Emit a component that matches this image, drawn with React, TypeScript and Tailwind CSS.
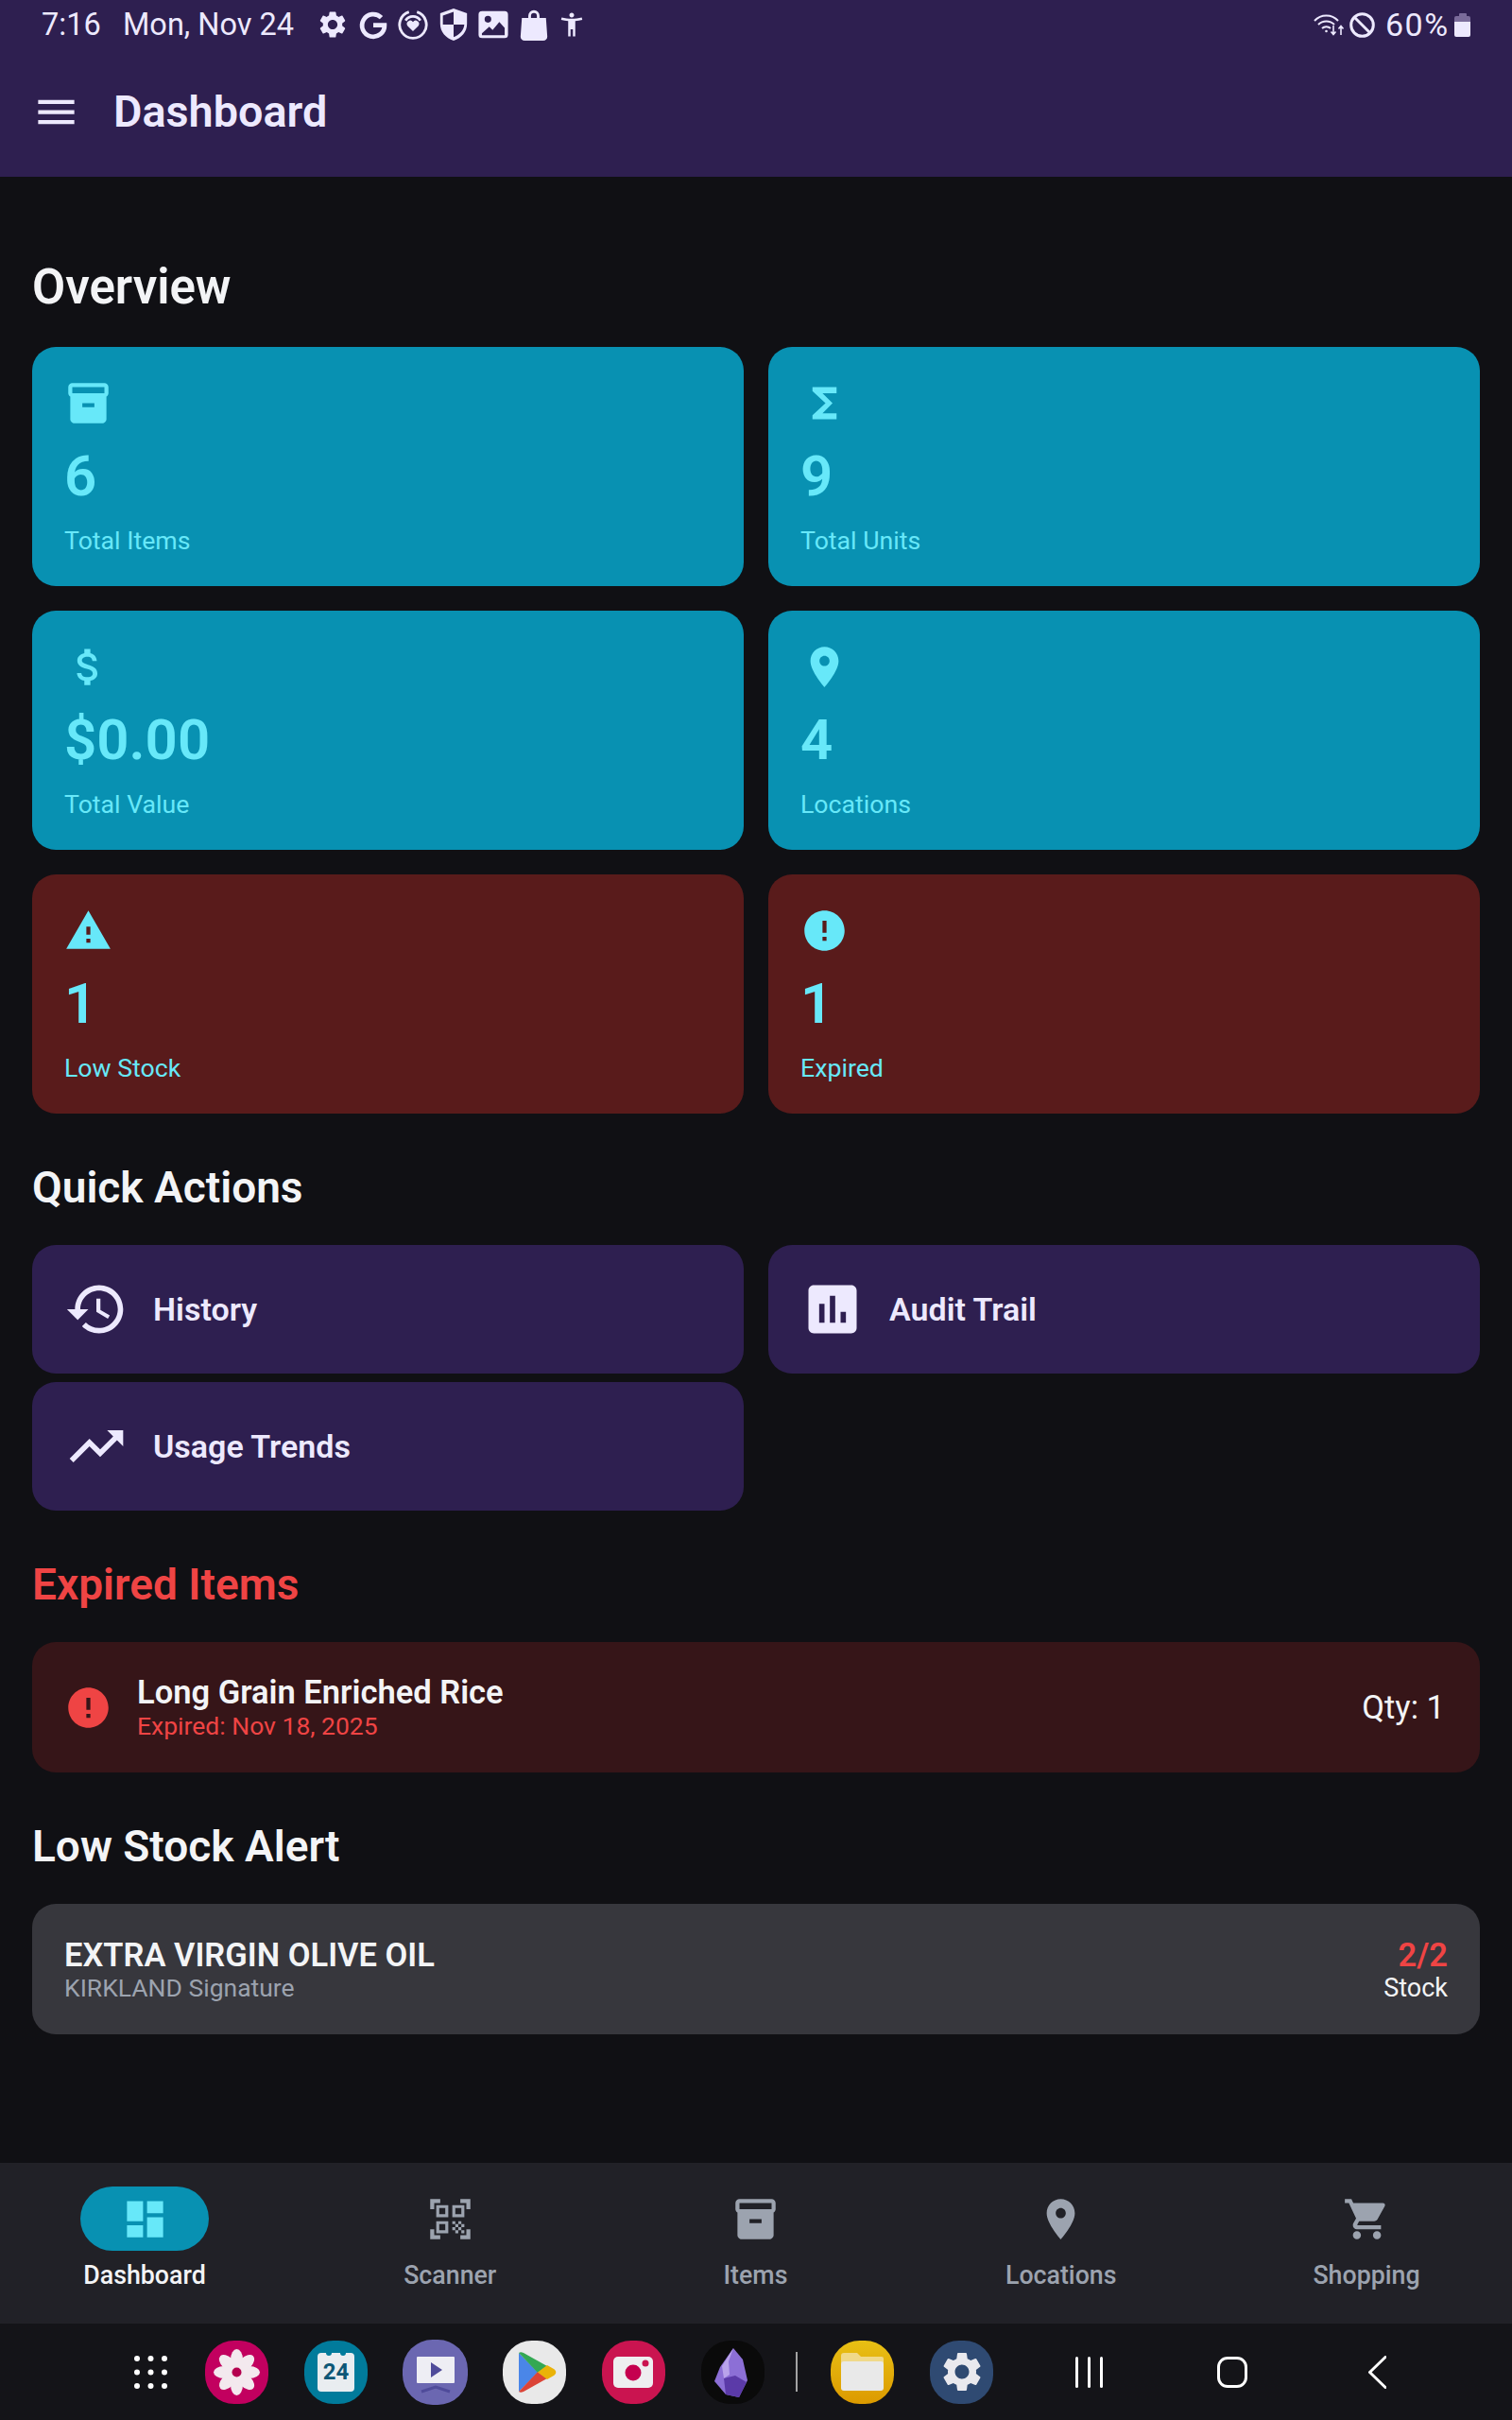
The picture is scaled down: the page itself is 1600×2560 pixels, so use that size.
import React from "react";

const P = {
  inventory: "M20 2H4c-1 0-2 .9-2 2v3.01c0 .72.43 1.34 1 1.69V20c0 1.1 1.1 2 2 2h14c.9 0 2-.9 2-2V8.7c.57-.35 1-.97 1-1.69V4c0-1.1-1-2-2-2zm-5 12H9v-2h6v2zm5-7H4V4l16-.02V7z",
  sigma: "M18 4H6v2l6.5 6L6 18v2h12v-3h-7l5-5-5-5h7z",
  money: "M11.8 10.9c-2.27-.59-3-1.2-3-2.15 0-1.09 1.01-1.85 2.7-1.85 1.78 0 2.44.85 2.5 2.1h2.21c-.07-1.72-1.12-3.3-3.21-3.81V3h-3v2.16c-1.94.42-3.5 1.68-3.5 3.61 0 2.31 1.91 3.46 4.7 4.13 2.5.6 3 1.48 3 2.41 0 .69-.49 1.79-2.7 1.79-2.06 0-2.87-.92-2.98-2.1h-2.2c.12 2.19 1.76 3.42 3.68 3.83V21h3v-2.15c1.95-.37 3.5-1.5 3.5-3.55 0-2.84-2.43-3.81-4.7-4.4z",
  pin: "M12 2C8.13 2 5 5.13 5 9c0 5.25 7 13 7 13s7-7.75 7-13c0-3.87-3.13-7-7-7zm0 9.5c-1.38 0-2.5-1.12-2.5-2.5s1.12-2.5 2.5-2.5 2.5 1.12 2.5 2.5-1.12 2.5-2.5 2.5z",
  warning: "M1 21h22L12 2 1 21zm12-3h-2v-2h2v2zm0-4h-2v-4h2v4z",
  error: "M12 2C6.48 2 2 6.48 2 12s4.48 10 10 10 10-4.48 10-10S17.52 2 12 2zm1 15h-2v-2h2v2zm0-4h-2V7h2v6z",
  history: "M13 3c-4.97 0-9 4.03-9 9H1l3.89 3.89.07.14L9 12H6c0-3.87 3.13-7 7-7s7 3.13 7 7-3.13 7-7 7c-1.93 0-3.68-.79-4.94-2.06l-1.42 1.42C8.27 19.99 10.51 21 13 21c4.97 0 9-4.03 9-9s-4.03-9-9-9zm-1 5v5l4.28 2.54.72-1.21-3.5-2.08V8H12z",
  assessment: "M19 3H5c-1.1 0-2 .9-2 2v14c0 1.1.9 2 2 2h14c1.1 0 2-.9 2-2V5c0-1.1-.9-2-2-2zM9 17H7v-7h2v7zm4 0h-2V7h2v10zm4 0h-2v-4h2v4z",
  trending: "M16 6l2.29 2.29-4.88 4.88-4-4L2 16.59 3.41 18l6-6 4 4 6.3-6.29L22 12V6z",
  dashboard: "M3 13h8V3H3v10zm0 8h8v-6H3v6zm10 0h8V11h-8v10zm0-18v6h8V3h-8z",
  qr: "M9.5 6.5v3h-3v-3h3M11 5H5v6h6V5zm-1.5 9.5v3h-3v-3h3M11 13H5v6h6v-6zm6.5-6.5v3h-3v-3h3M19 5h-6v6h6V5zm-6 8h1.5v1.5H13V13zm1.5 1.5H16V16h-1.5v-1.5zM16 13h1.5v1.5H16V13zm-3 3h1.5v1.5H13V16zm1.5 1.5H16V19h-1.5v-1.5zM16 16h1.5v1.5H16V16zm1.5-1.5H19V16h-1.5v-1.5zm0 3H19V19h-1.5v-1.5zM22 7h-2V4h-3V2h5v5zm0 15v-5h-2v3h-3v2h5zM2 22h5v-2H4v-3H2v5zM2 2v5h2V4h3V2H2z",
  cart: "M7 18c-1.1 0-1.99.9-1.99 2S5.9 22 7 22s2-.9 2-2-.9-2-2-2zM1 2v2h2l3.6 7.59-1.35 2.45c-.16.28-.25.61-.25.96 0 1.1.9 2 2 2h12v-2H7.42c-.14 0-.25-.11-.25-.25l.03-.09.9-1.63h7.45c.75 0 1.41-.41 1.75-1.03l3.58-6.49c.08-.14.12-.31.12-.48 0-.55-.45-1-1-1H5.21l-.94-2H1zm16 16c-1.1 0-1.99.9-1.99 2s.89 2 1.99 2 2-.9 2-2-.9-2-2-2z",
  menu: "M3 18h18v-2H3v2zm0-5h18v-2H3v2zm0-7v2h18V6H3z",
  settings: "M19.14 12.94c.04-.3.06-.61.06-.94 0-.32-.02-.64-.07-.94l2.03-1.58c.18-.14.23-.41.12-.61l-1.92-3.32c-.12-.22-.37-.29-.59-.22l-2.39.96c-.5-.38-1.03-.7-1.62-.94l-.36-2.54c-.04-.24-.24-.41-.48-.41h-3.84c-.24 0-.43.17-.47.41l-.36 2.54c-.59.24-1.13.57-1.62.94l-2.39-.96c-.22-.08-.47 0-.59.22L2.74 8.87c-.12.21-.08.47.12.61l2.03 1.58c-.05.3-.09.63-.09.94s.02.64.07.94l-2.03 1.58c-.18.14-.23.41-.12.61l1.92 3.32c.12.22.37.29.59.22l2.39-.96c.5.38 1.03.7 1.62.94l.36 2.54c.05.24.24.41.48.41h3.84c.24 0 .44-.17.47-.41l.36-2.54c.59-.24 1.13-.56 1.62-.94l2.39.96c.22.08.47 0 .59-.22l1.92-3.32c.12-.22.07-.47-.12-.61l-2.01-1.58zM12 15.6c-1.98 0-3.6-1.62-3.6-3.6s1.62-3.6 3.6-3.6 3.6 1.62 3.6 3.6-1.62 3.6-3.6 3.6z",
  access: "M20.5 6c-2.61.7-5.67 1-8.5 1s-5.89-.3-8.5-1L3 8c1.86.5 4 .83 6 1v13h2v-6h2v6h2V9c2-.17 4.14-.5 6-1l-.5-2zM12 6c1.1 0 2-.9 2-2s-.9-2-2-2-2 .9-2 2 .9 2 2 2z",
};

function I({ d, className }: { d: string; className: string }) {
  return (
    <svg viewBox="0 0 24 24" fill="currentColor" className={"shrink-0 " + className}>
      <path d={d} />
    </svg>
  );
}

function StatusBar() {
  return (
    <div className="flex h-[52px] items-center pl-[44px] pr-[44px] text-[32.5px] leading-[52px] text-[#ede9fe]">
      <span className="w-[86px]">7:16</span>
      <span className="w-[205px]">Mon, Nov 24</span>
      <div className="flex items-center gap-[8.5px]">
        <I d={P.settings} className="h-[34px] w-[34px]" />
        <svg viewBox="0 0 30 30" fill="none" stroke="currentColor" strokeWidth="4.2" className="h-[34px] w-[34px] shrink-0">
          <path d="M22.5 8.5A10.500 10.500 0 1 0 25.500 15.500H15" />
        </svg>
        <svg viewBox="0 0 24 24" fill="none" stroke="currentColor" className="h-[34px] w-[34px] shrink-0">
          <path strokeWidth="2" d="M9 2.6a10 10 0 1 0 6 0" />
          <path strokeWidth="0" fill="currentColor" d="M12 17l-4-4a2.5 2.5 0 0 1 4-3a2.5 2.5 0 0 1 4 3z" />
          <path strokeWidth="2" d="M6.5 9a6.5 6.5 0 0 1 11 0" />
        </svg>
        <svg viewBox="0 0 24 24" className="h-[34px] w-[34px] shrink-0" fill="currentColor">
          <path fillRule="evenodd" d="M12 0l10 3.5v8c0 6-4 10.500-10 12.500c-6-2-10-6.500-10-12.500v-8zM12 2.500l-8 2.800v6.700h8zM12 12v9.300c4.500-1.800 7.600-5 8-9.300z" />
        </svg>
        <svg viewBox="0 0 24 24" className="h-[34px] w-[34px] shrink-0" fill="currentColor">
          <path fillRule="evenodd" d="M3.500 2h17A2.500 2.500 0 0 1 23 4.500v15a2.500 2.500 0 0 1-2.500 2.500h-17A2.500 2.500 0 0 1 1 19.500v-15A2.500 2.500 0 0 1 3.500 2zM8 5.500a2.500 2.500 0 1 0 0 5a2.500 2.500 0 0 0 0-5zM3.500 20h17v-5.500l-4-4.500-5 6-2.500-2.500-5.500 5z" />
        </svg>
        <svg viewBox="0 0 24 24" className="h-[34px] w-[34px] shrink-0" fill="currentColor">
          <path fillRule="evenodd" d="M7.800 7V5.500a4.200 4.200 0 0 1 8.400 0V7H21l1 14a3 3 0 0 1-3 3H5a3 3 0 0 1-3-3L3 7zM9.800 7h4.400V5.500a2.200 2.200 0 0 0-4.400 0z" />
        </svg>
        <I d={P.access} className="h-[30px] w-[30px]" />
      </div>
      <div className="ml-auto flex items-center">
        <svg viewBox="0 0 33 24" fill="none" stroke="currentColor" strokeWidth="2" className="h-[24px] w-[33px] shrink-0">
          <path d="M1 8a17 17 0 0 1 25 0M5 12a12 12 0 0 1 17 0M9 16a6.500 6.500 0 0 1 9 0" />
          <circle cx="13.500" cy="19" r="1.300" fill="currentColor" stroke="none" />
          <path strokeWidth="1.600" d="M21 13v9M18.500 19.500l2.500 3 2.500-3M29 23v-9M26.500 16.500l2.500-3 2.500 3" />
        </svg>
        <svg viewBox="0 0 27 27" fill="none" stroke="currentColor" strokeWidth="3" className="ml-[5px] h-[27px] w-[27px] shrink-0">
          <circle cx="13.500" cy="13.500" r="11.800" />
          <path d="M5 5l17 17" />
        </svg>
        <span className="ml-[11px] w-[73px] text-[34px] tracking-[1.5px]">60%</span>
        <div className="flex h-[25px] w-[17px] shrink-0 flex-col items-center">
          <div className="h-[3px] w-[8px] shrink-0 rounded-t-[1px] bg-[#7a6b9a]" />
          <div className="h-[6px] w-[17px] shrink-0 rounded-t-[2px] bg-[#7a6b9a]" />
          <div className="h-[16px] w-[17px] shrink-0 rounded-b-[2px] bg-[#ede9fe]" />
        </div>
      </div>
    </div>
  );
}

function Header() {
  return (
    <div className="bg-[#2e1f50]">
      <StatusBar />
      <div className="flex h-[135px] items-center pb-[3px] pl-[34px] text-[#ede9fe]">
        <I d={P.menu} className="h-[51px] w-[51px]" />
        <span className="ml-[35px] text-[46.75px] font-semibold leading-[60px]">Dashboard</span>
      </div>
    </div>
  );
}

function Title({ children, className }: { children: React.ReactNode; className: string }) {
  return <h2 className={"h-[60px] font-semibold leading-[60px] " + className}>{children}</h2>;
}

function Stat({ d, value, label, red }: { d: string; value: string; label: string; red?: boolean }) {
  return (
    <div className={"rounded-[25px] px-[34px] pb-[27px] pt-[34px] text-[#67e8f9] " + (red ? "bg-[#591b1b]" : "bg-[#0891b2]")}>
      <I d={d} className="h-[51px] w-[51px]" />
      <div className="mt-[18px] h-[68px] text-[60px] font-semibold leading-[68px]">{value}</div>
      <div className="mt-[13px] h-[42px] text-[26.7px] leading-[42px]">{label}</div>
    </div>
  );
}

function Action({ d, label }: { d: string; label: string }) {
  return (
    <div className="flex h-[136px] items-center rounded-[25px] bg-[#2e1f50] px-[34px] text-[#ede9fe]">
      <I d={d} className="h-[68px] w-[68px]" />
      <span className="ml-[26px] text-[34px] font-semibold leading-[48px]">{label}</span>
    </div>
  );
}

function NavItem({ d, label, active }: { d: string; label: string; active?: boolean }) {
  return (
    <div className="flex w-[170px] flex-col items-center">
      <div className={"flex h-[68px] w-[136px] items-center justify-center rounded-full " + (active ? "bg-[#0891b2] text-[#67e8f9]" : "text-[#9ca3af]")}>
        <I d={d} className="h-[51px] w-[51px]" />
      </div>
      <span className={"mt-[8px] text-[26.75px] font-medium leading-[36px] " + (active ? "text-[#f3f4f6]" : "text-[#9ca3af]")}>{label}</span>
    </div>
  );
}

function Squircle({ className, children }: { className: string; children: React.ReactNode }) {
  return <div className={"flex shrink-0 items-center justify-center overflow-hidden rounded-[46%] " + className}>{children}</div>;
}

function Dock() {
  return (
    <div className="flex h-[102px] items-center bg-[#141418] pl-[142px] text-white">
      <svg viewBox="0 0 35 35" className="h-[35px] w-[35px] shrink-0" fill="currentColor">
        {[3, 17.5, 32].flatMap((y) => [3, 17.5, 32].map((x) => <circle key={x + "-" + y} cx={x} cy={y} r="3" />))}
      </svg>
      <div className="ml-[40px] flex items-center gap-[38px]">
        <Squircle className="h-[67px] w-[67px] bg-[#c2005f]">
          <svg viewBox="0 0 67 67" className="h-[67px] w-[67px]">
            {[0, 45, 90, 135, 180, 225, 270, 315].map((r) => (
              <ellipse key={r} cx="33.500" cy="20" rx="6.500" ry="11" fill="#f3e9ee" transform={`rotate(${r} 33.500 33.500)`} />
            ))}
            <circle cx="33.500" cy="33.500" r="5" fill="#b5004f" />
          </svg>
        </Squircle>
        <Squircle className="h-[67px] w-[67px] bg-[#017b9b]">
          <div className="relative flex h-[41px] w-[39px] items-center justify-center rounded-[4px] bg-[#e9edf0] text-[24px] font-bold leading-none text-[#0d5776]">
            <div className="absolute left-[9px] top-0 h-[3px] w-[6px] rounded-b-full bg-[#017b9b]" />
            <div className="absolute right-[9px] top-0 h-[3px] w-[6px] rounded-b-full bg-[#017b9b]" />
            24
          </div>
        </Squircle>
        <Squircle className="-mx-[1px] h-[69px] w-[69px] bg-[#6b67b1]">
          <svg viewBox="0 0 69 69" className="h-[69px] w-[69px]">
            <rect x="15" y="18" width="40" height="28" rx="1" fill="#eeeef4" />
            <path d="M30 24l12 8-12 8z" fill="#4f4b9a" />
            <path d="M20 55l15-5 15 5" stroke="#4f4b9a" strokeWidth="3" fill="none" />
          </svg>
        </Squircle>
        <Squircle className="h-[67px] w-[67px] bg-[#e9e9e9]">
          <svg viewBox="0 0 67 67" className="h-[67px] w-[67px]">
            <path d="M17 13v41l20-20.500z" fill="#4a86e8" />
            <path d="M17 13c1-1 3-1 5 0l25 14-10 7z" fill="#34a853" />
            <path d="M17 54c1 1 3 1 5 0l25-14-10-7z" fill="#db4437" />
            <path d="M47 26l7 4c3 2 3 5 0 7l-7 4-10-7.500z" fill="#eab308" />
          </svg>
        </Squircle>
        <Squircle className="h-[67px] w-[67px] bg-[#ca1450]">
          <svg viewBox="0 0 67 67" className="h-[67px] w-[67px]">
            <rect x="12" y="17" width="42" height="33" rx="5" fill="#eeeef0" />
            <circle cx="33" cy="34" r="8.500" fill="#c5004f" />
            <circle cx="46" cy="24" r="3.500" fill="#ca1450" />
          </svg>
        </Squircle>
        <Squircle className="h-[67px] w-[67px] bg-[#0a0a0a]">
          <svg viewBox="0 0 67 67" className="h-[67px] w-[67px]">
            <path d="M34 8l10 12 5 22-9 18-14-3-12-14 6-15z" fill="#8c6fd6" />
            <path d="M34 8l-5 14 1 14 -6 4-2-13z" fill="#b9a3eb" />
            <path d="M24 40l12-3 12 7-8 16-14-3z" fill="#5b3aa8" />
          </svg>
        </Squircle>
      </div>
      <div className="ml-[33px] h-[42px] w-[2px] shrink-0 bg-[#a3a3a3]" />
      <div className="ml-[35px] flex items-center gap-[38px]">
        <Squircle className="h-[67px] w-[67px] bg-gradient-to-b from-[#e8c014] to-[#dc9a00]">
          <svg viewBox="0 0 67 67" className="h-[67px] w-[67px]">
            <path d="M11 24v-8a3 3 0 0 1 3-3h14l4 4h22a2 2 0 0 1 2 2v5z" fill="#f0d98a" />
            <rect x="11" y="22" width="45" height="31" rx="3" fill="#e9e9e9" />
          </svg>
        </Squircle>
        <Squircle className="h-[67px] w-[67px] bg-[#2f4a72]">
          <svg viewBox="0 0 24 24" className="h-[50px] w-[50px]" fill="#e9e9ee">
            <path d={P.settings} />
          </svg>
        </Squircle>
      </div>
      <div className="ml-[87px] flex h-[33px] w-[29px] shrink-0 justify-between">
        <div className="w-[3px] rounded-full bg-white" />
        <div className="w-[3px] rounded-full bg-white" />
        <div className="w-[3px] rounded-full bg-white" />
      </div>
      <div className="ml-[121px] h-[33px] w-[32px] shrink-0 rounded-[11px] border-[3px] border-white" />
      <svg viewBox="0 0 19 35" fill="none" stroke="currentColor" strokeWidth="3" strokeLinecap="round" strokeLinejoin="round" className="ml-[128px] h-[35px] w-[19px] shrink-0">
        <path d="M18 1.500L1.500 17.500L18 33.500" />
      </svg>
    </div>
  );
}

export default function App() {
  return (
    <div className="flex h-[2560px] w-[1600px] flex-col overflow-hidden bg-[#101014] font-['Roboto',sans-serif]">
      <Header />
      <main className="flex-1 px-[34px] pt-[87px] text-[#f3f4f6]">
        <Title className="mb-[33px] text-[51px]">Overview</Title>
        <div className="grid grid-cols-2 gap-[26px]">
          <Stat d={P.inventory} value="6" label="Total Items" />
          <Stat d={P.sigma} value="9" label="Total Units" />
          <Stat d={P.money} value="$0.00" label="Total Value" />
          <Stat d={P.pin} value="4" label="Locations" />
          <Stat d={P.warning} value="1" label="Low Stock" red />
          <Stat d={P.error} value="1" label="Expired" red />
        </div>
        <Title className="mb-[31px] mt-[48px] text-[46px]">Quick Actions</Title>
        <div className="grid grid-cols-2 gap-x-[26px] gap-y-[9px]">
          <Action d={P.history} label="History" />
          <Action d={P.assessment} label="Audit Trail" />
          <Action d={P.trending} label="Usage Trends" />
        </div>
        <Title className="mb-[31px] mt-[48px] text-[46px] text-[#ef4444]">Expired Items</Title>
        <div className="flex h-[138px] items-center rounded-[25px] bg-[#361518] pl-[34px] pr-[37px]">
          <I d={P.error} className="h-[51px] w-[51px] text-[#ef4444]" />
          <div className="ml-[26px] flex-1">
            <div className="text-[34.5px] font-semibold leading-[38px]">Long Grain Enriched Rice</div>
            <div className="pt-[1px] text-[26.5px] leading-[32px] text-[#ef4444]">Expired: Nov 18, 2025</div>
          </div>
          <span className="text-[34.5px] leading-[48px]">Qty: 1</span>
        </div>
        <Title className="mb-[31px] mt-[48px] text-[46px]">Low Stock Alert</Title>
        <div className="flex h-[138px] items-center justify-between rounded-[25px] bg-[#37373d] px-[34px] pt-[2px]">
          <div>
            <div className="text-[34.5px] font-semibold leading-[38px]">EXTRA VIRGIN OLIVE OIL</div>
            <div className="text-[26.5px] leading-[32px] text-[#9ca3af]">KIRKLAND Signature</div>
          </div>
          <div className="text-right">
            <div className="text-[34.5px] font-semibold leading-[38px] text-[#ef4444]">2/2</div>
            <div className="text-[27px] leading-[32px]">Stock</div>
          </div>
        </div>
      </main>
      <nav className="flex h-[170px] justify-between bg-[#212127] pl-[68px] pr-[69px] pt-[25px]">
        <NavItem d={P.dashboard} label="Dashboard" active />
        <NavItem d={P.qr} label="Scanner" />
        <NavItem d={P.inventory} label="Items" />
        <NavItem d={P.pin} label="Locations" />
        <NavItem d={P.cart} label="Shopping" />
      </nav>
      <Dock />
    </div>
  );
}
